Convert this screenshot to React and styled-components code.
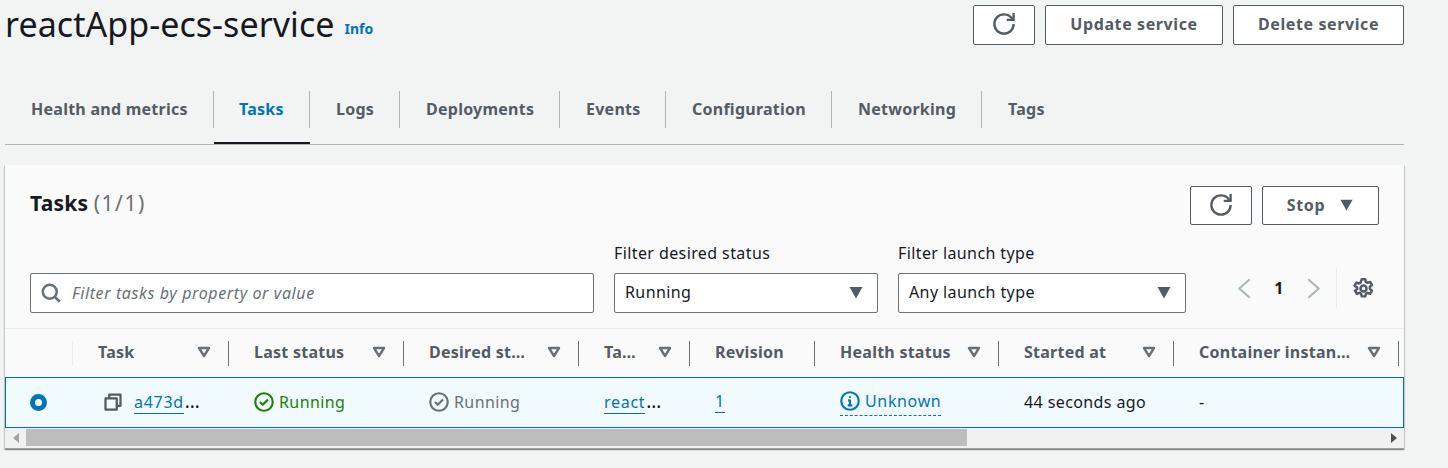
import React from 'react'
import styled, { createGlobalStyle } from 'styled-components'

const GlobalStyle = createGlobalStyle`
  html, body {
    margin: 0;
    background: #f2f3f3;
    color: #16191f;
    font-family: "Noto Sans", "Liberation Sans", sans-serif;
    font-size: 16px;
    letter-spacing: 0.4px;
  }
  * { box-sizing: border-box; }
`

const Page = styled.div`
  width: 1448px;
  height: 468px;
  padding-left: 5px;
  overflow: hidden;
`

const Main = styled.div`
  width: 1399px;
`

const PageHeader = styled.div`
  display: flex;
  justify-content: space-between;
  height: 45px;
  padding-top: 5px;
`

const TitleRow = styled.div`
  display: flex;
  align-items: flex-start;
  gap: 10px;
  margin-top: -4px;
`

const Title = styled.h1`
  margin: 0;
  font-size: 34px;
  font-weight: 400;
  line-height: 46px;
  letter-spacing: 0.05px;
`

const InfoLink = styled.a`
  margin-top: 18px;
  color: #0073bb;
  font-size: 14px;
  font-weight: 700;
  letter-spacing: 0;
  line-height: 20px;
`

const ButtonRow = styled.div`
  display: flex;
  gap: 10px;
`

const Button = styled.button`
  display: flex;
  align-items: center;
  justify-content: center;
  gap: 14px;
  width: ${props => props.$w}px;
  height: ${props => props.$h || 40}px;
  padding: 0 0 2px;
  background: #fff;
  border: 1px solid #545b64;
  border-radius: 2px;
  color: #545b64;
  font-family: inherit;
  font-size: 16px;
  font-weight: 700;
  letter-spacing: 0.6px;
`

const Tabs = styled.div`
  display: flex;
  height: 55px;
  margin-top: 45px;
  border-bottom: 1px solid #aab7b8;
`

const Tab = styled.div`
  width: ${props => props.$w}px;
  height: 54px;
  padding-top: 1px;
  border-bottom: 2px solid ${props => props.$active ? '#16191f' : 'transparent'};
`

const TabLabel = styled.div`
  display: flex;
  align-items: center;
  height: 37px;
  padding-bottom: 2px;
  padding-left: ${props => props.$pad}px;
  border-right: ${props => props.$last ? 'none' : '1px solid #aab7b8'};
  color: ${props => props.$active ? '#0073bb' : '#545b64'};
  font-weight: 700;
  letter-spacing: 0.25px;
`

const Card = styled.section`
  height: 284px;
  margin-top: 20px;
  background: #fafafa;
  box-shadow: 0 1px 1px 0 rgba(0, 28, 36, 0.3), 1px 1px 1px 0 rgba(0, 28, 36, 0.15), -1px 1px 1px 0 rgba(0, 28, 36, 0.15);
`

const CardHeader = styled.div`
  height: 164px;
  padding: 21px 25px 0;
  border-bottom: 1px solid #eaeded;
`

const CardTop = styled.div`
  display: flex;
  justify-content: space-between;
  height: 39px;
`

const CardTitle = styled.h2`
  margin: 0;
  font-size: 21px;
  font-weight: 700;
  line-height: 34px;
  letter-spacing: 0.2px;
`

const Counter = styled.span`
  color: #687078;
  font-size: 21px;
  font-weight: 400;
  letter-spacing: 1.5px;
`

const Filters = styled.div`
  display: flex;
  align-items: flex-end;
  gap: 20px;
  margin-top: 16px;
`

const Field = styled.div`
  flex: none;
  width: ${props => props.$w}px;
`

const FieldLabel = styled.div`
  height: 24px;
  margin-bottom: 8px;
  line-height: 24px;
`

const InputBox = styled.div`
  display: flex;
  align-items: center;
  justify-content: space-between;
  height: 40px;
  padding: 0 13px 2px 10px;
  background: #fff;
  border: 1px solid #687078;
  border-radius: 2px;
`

const SearchBox = styled(InputBox)`
  flex: none;
  justify-content: flex-start;
  gap: 11px;
  width: 564px;
  padding-bottom: 0;
  color: #687078;
  font-style: italic;
  letter-spacing: 0.6px;
`

const Pagination = styled.div`
  display: flex;
  align-items: center;
  flex: none;
  height: 40px;
  margin-bottom: 5px;
  margin-left: 28px;
`

const PageNumber = styled.span`
  width: 48px;
  text-align: center;
  font-weight: 700;
`

const Divider = styled.div`
  width: 1px;
  height: 40px;
  margin: 0 16px 0 12px;
  background: #eaeded;
`

const columns = '68px 156px 175px 175px 111px 125px 184px 175px 225px'

const HeadRow = styled.div`
  display: grid;
  grid-template-columns: ${columns};
  align-items: center;
  height: 48px;
`

const HeadCell = styled.div`
  display: flex;
  align-items: center;
  justify-content: space-between;
  height: 25px;
  padding: 0 17px 2px 25px;
  border-right: 1px solid ${props => props.$light ? '#eaeded' : '#687078'};
  color: #545b64;
  font-weight: 700;
  letter-spacing: 0.25px;
`

const BodyRow = styled.div`
  display: grid;
  grid-template-columns: ${columns};
  align-items: center;
  height: 51px;
  background: #f1faff;
  border: 1px solid #0073a8;
`

const Cell = styled.div`
  display: flex;
  align-items: center;
  gap: ${props => props.$gap || 5}px;
  padding-left: ${props => props.$pad || 24}px;
  padding-bottom: 1px;
  color: ${props => props.$color || '#16191f'};
  white-space: nowrap;
`

const Radio = styled.span`
  width: 17px;
  height: 17px;
  border: 5px solid #0073bb;
  border-radius: 50%;
  background: #fff;
`

const TableLink = styled.a`
  color: #0073bb;
  border-bottom: 1px solid #0073bb;
  line-height: 21px;
  letter-spacing: 0.7px;
`

const Ellipsis = styled.span`
  padding-left: 1px;
  font-size: 19px;
  line-height: 16px;
`

const HealthLink = styled.a`
  display: flex;
  align-items: center;
  gap: 5px;
  margin-top: 1px;
  padding-bottom: 3px;
  border-bottom: 1px dashed #0073bb;
  color: #0073bb;
  letter-spacing: 0.65px;
`

const ScrollBar = styled.div`
  display: flex;
  align-items: center;
  height: 21px;
  background: #f1f1f1;
  border-bottom: 1px solid #a0a0a0;
`

const ScrollArrow = styled.span`
  display: flex;
  justify-content: center;
  width: ${props => props.$w}px;
`

const ScrollThumb = styled.div`
  width: 941px;
  height: 17px;
  margin-top: -1px;
  background: #bdbdbd;
`

const ScrollTrack = styled.div`
  flex: 1;
`

const Icon = ({ size = 16, color = 'currentColor', width = 2, children }) => (
  <svg width={size} height={size} viewBox="0 0 16 16" fill="none" stroke={color} strokeWidth={width} strokeLinejoin="round">
    {children}
  </svg>
)

const RefreshIcon = () => (
  <Icon size={22} width={1.7}>
    <path d="M10 5h5V0" />
    <path d="M15 8a6.94 6.94 0 0 1-7 7 6.94 6.94 0 0 1-7-7 6.94 6.94 0 0 1 7-7 7 7 0 0 1 6.33 4" />
  </Icon>
)

const SearchIcon = () => (
  <Icon size={20} color="#687078">
    <circle cx="7" cy="7" r="5.6" />
    <path d="m11 11 4 4" />
  </Icon>
)

const CaretFilled = ({ size = 16, color = '#545b64' }) => (
  <svg width={size} height={size} viewBox="0 0 16 16">
    <path d="M1.5 3h13L8 14.5z" fill={color} />
  </svg>
)

const CaretOutline = () => (
  <svg width="14" height="14" viewBox="0 0 14 14" fill="none" stroke="#687078" strokeWidth="2.4" strokeLinejoin="round">
    <path d="M2 3h10l-5 8z" />
  </svg>
)

const Chevron = ({ dir }) => (
  <Icon size={21} color="#aab7b8" width={1.6}>
    <path d={dir === 'left' ? 'M12 1 4 8l8 7' : 'M4 1l8 7-8 7'} />
  </Icon>
)

const GearIcon = () => (
  <Icon size={21} color="#545b64" width={1.9}>
    <path d="M6.6 1h2.8l.4 2 1.2.7 2-.7 1.4 2.4-1.6 1.4v1.4l1.6 1.4-1.4 2.4-2-.7-1.2.7-.4 2H6.6l-.4-2-1.2-.7-2 .7-1.4-2.4 1.6-1.4V7.3L1.2 5.9 2.6 3.5l2 .7 1.2-.7z" />
    <circle cx="8" cy="8" r="2.3" />
  </Icon>
)

const CopyIcon = () => (
  <Icon size={20} color="#545b64" width={1.8}>
    <path d="M2 5h9v9H2z" />
    <path d="M5 5V2h9v9h-3" />
  </Icon>
)

const CheckCircle = ({ color }) => (
  <Icon size={20} color={color} width={1.7}>
    <circle cx="8" cy="8" r="7" />
    <path d="M4.8 8l2.2 2.2 4.2-4.2" />
  </Icon>
)

const InfoCircle = () => (
  <Icon size={20} color="#0073bb" width={1.7}>
    <circle cx="8" cy="8" r="7" />
    <path d="M8 11.5V7.5H6.5M6.2 11.5h3.6M8 4.2v1.4" />
  </Icon>
)

const CaretSide = ({ dir }) => (
  <svg width="6" height="10" viewBox="0 0 6 10">
    <path d={dir === 'left' ? 'M6 0v10L0 5z' : 'M0 0v10l6-5z'} fill={dir === 'left' ? '#a3a3a3' : '#505050'} />
  </svg>
)

const tabs = [
  { label: 'Health and metrics', w: 209, pad: 26 },
  { label: 'Tasks', w: 96, pad: 25, active: true },
  { label: 'Logs', w: 90, pad: 26 },
  { label: 'Deployments', w: 160, pad: 26 },
  { label: 'Events', w: 106, pad: 26 },
  { label: 'Configuration', w: 166, pad: 26 },
  { label: 'Networking', w: 150, pad: 26 },
  { label: 'Tags', w: 100, pad: 26, last: true },
]

const headers = ['Task', 'Last status', 'Desired st…', 'Ta…', 'Revision', 'Health status', 'Started at', 'Container instan…']

const App = () => {
  return (
    <Page>
      <GlobalStyle />
      <Main>
        <PageHeader>
          <TitleRow>
            <Title>reactApp-ecs-service</Title>
            <InfoLink>Info</InfoLink>
          </TitleRow>
          <ButtonRow>
            <Button $w={62}><RefreshIcon /></Button>
            <Button $w={178}>Update service</Button>
            <Button $w={171}>Delete service</Button>
          </ButtonRow>
        </PageHeader>

        <Tabs>
          {tabs.map(tab => (
            <Tab key={tab.label} $w={tab.w} $active={tab.active}>
              <TabLabel $pad={tab.pad} $active={tab.active} $last={tab.last}>{tab.label}</TabLabel>
            </Tab>
          ))}
        </Tabs>

        <Card>
          <CardHeader>
            <CardTop>
              <CardTitle>Tasks <Counter>(1/1)</Counter></CardTitle>
              <ButtonRow>
                <Button $w={62} $h={39}><RefreshIcon /></Button>
                <Button $w={117} $h={39}>Stop <CaretFilled size={15} /></Button>
              </ButtonRow>
            </CardTop>
            <Filters>
              <SearchBox><SearchIcon />Filter tasks by property or value</SearchBox>
              <Field $w={264}>
                <FieldLabel>Filter desired status</FieldLabel>
                <InputBox>Running <CaretFilled /></InputBox>
              </Field>
              <Field $w={288}>
                <FieldLabel>Filter launch type</FieldLabel>
                <InputBox>Any launch type <CaretFilled /></InputBox>
              </Field>
              <Pagination>
                <Chevron dir="left" />
                <PageNumber>1</PageNumber>
                <Chevron dir="right" />
                <Divider />
                <GearIcon />
              </Pagination>
            </Filters>
          </CardHeader>

          <HeadRow>
            <HeadCell $light />
            {headers.map(h => (
              <HeadCell key={h}>
                {h}
                {h !== 'Revision' && <CaretOutline />}
              </HeadCell>
            ))}
          </HeadRow>

          <BodyRow>
            <Cell><Radio /></Cell>
            <Cell $pad={29} $gap={11}><CopyIcon /><span><TableLink>a473d</TableLink><Ellipsis>…</Ellipsis></span></Cell>
            <Cell $color="#1d8102"><CheckCircle color="#1d8102" />Running</Cell>
            <Cell $color="#687078"><CheckCircle color="#687078" />Running</Cell>
            <Cell><span><TableLink>react</TableLink><Ellipsis>…</Ellipsis></span></Cell>
            <Cell><TableLink>1</TableLink></Cell>
            <Cell><HealthLink><InfoCircle />Unknown</HealthLink></Cell>
            <Cell>44 seconds ago</Cell>
            <Cell>-</Cell>
          </BodyRow>

          <ScrollBar>
            <ScrollArrow $w={21}><CaretSide dir="left" /></ScrollArrow>
            <ScrollThumb />
            <ScrollTrack />
            <ScrollArrow $w={21}><CaretSide dir="right" /></ScrollArrow>
          </ScrollBar>
        </Card>
      </Main>
    </Page>
  )
}

export default App
